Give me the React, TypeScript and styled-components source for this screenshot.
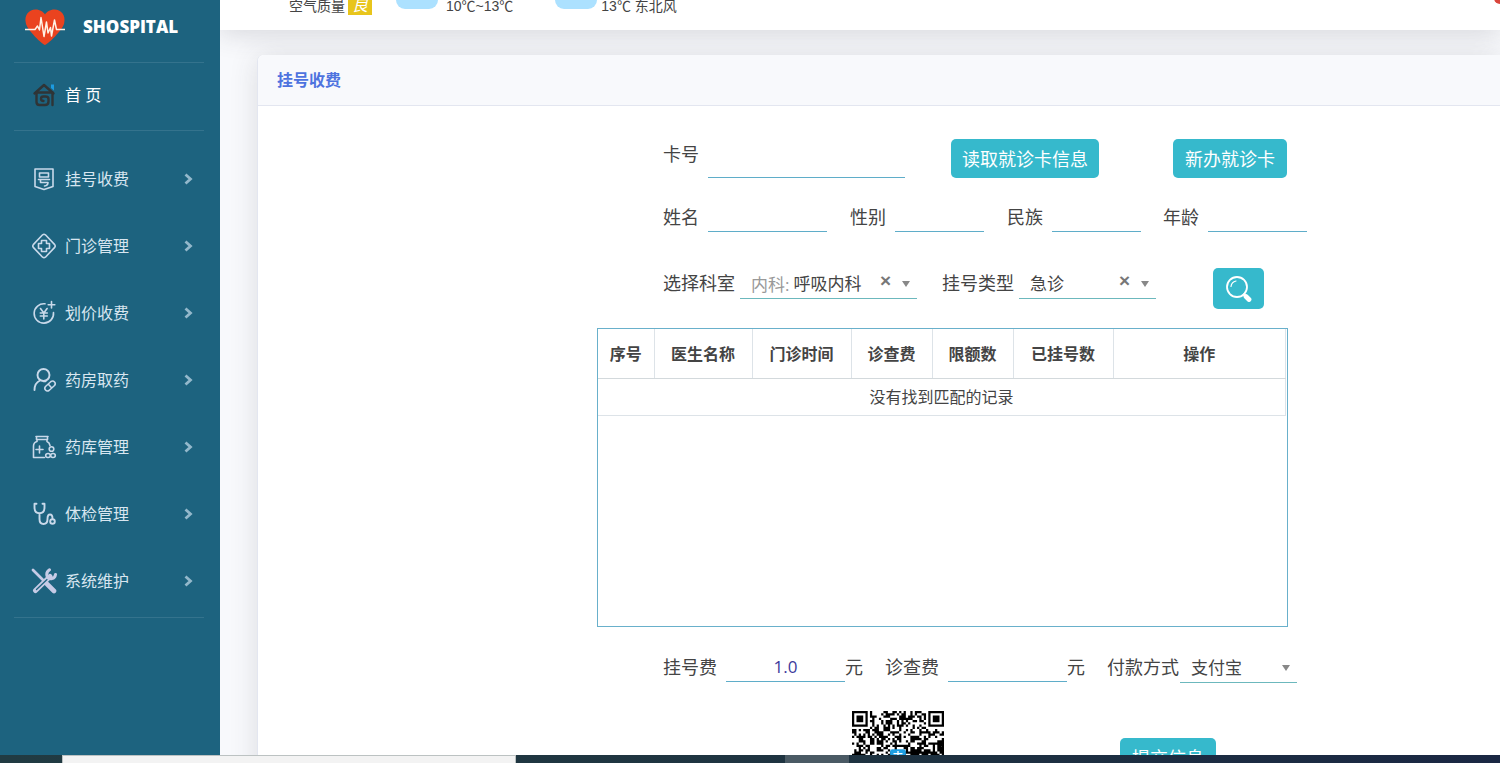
import React, { useState } from "react";
import styled, { createGlobalStyle } from "styled-components";

const GlobalStyle = createGlobalStyle`
  *, *::before, *::after { box-sizing: border-box; }
  body {
    margin: 0;
    background: #f8f9fc;
    color: #444;
    font-family: "Open Sans", "Noto Sans CJK SC", sans-serif;
    font-size: 16px;
  }
  button, input, select { font-family: inherit; margin: 0; }
`;

const Screen = styled.div`
  display: flex;
  flex-direction: column;
  height: 100vh;
  overflow: hidden;
`;

const Workspace = styled.div`
  display: flex;
  flex: 1;
  min-height: 0;
  overflow: hidden;
`;

/* ---------- sidebar ---------- */

const Sidebar = styled.nav`
  flex: none;
  width: 220px;
  padding: 0 16px 0 14px;
  background: #1d637f;
`;

const Brand = styled.a`
  display: flex;
  align-items: center;
  gap: 17px;
  height: 62px;
  padding: 0 0 9px 10px;
  color: #fff;
  font-size: 17px;
  font-weight: 800;
  text-decoration: none;
`;

const Divider = styled.hr`
  margin: 0;
  border: 0;
  border-top: 1px solid #34738d;
`;

const NavGroup = styled.div<{ $spaced?: boolean }>`
  padding: ${(p) => (p.$spaced ? "16px 0 1px" : "0")};
`;

const NavLink = styled.a`
  display: flex;
  align-items: center;
  gap: 8px;
  height: 67px;
  padding: 0 11px 4px 17px;
  color: #d8e6f0;
  font-size: 16px;
  text-decoration: none;
`;

const NavText = styled.span<{ $bright?: boolean }>`
  flex: 1;
  padding-bottom: 2px;
  color: ${(p) => (p.$bright ? "#fff" : "inherit")};
`;

/* ---------- content frame ---------- */

const Content = styled.div`
  display: flex;
  flex: 1;
  flex-direction: column;
  min-width: 0;
  overflow: hidden;
`;

const TopBar = styled.header`
  display: flex;
  flex: none;
  align-items: flex-end;
  height: 30px;
  padding: 0 0 15px 69px;
  background: #fff;
  box-shadow: 0 2px 28px rgba(58, 59, 69, 0.2);
  color: #444;
  font-family: "Liberation Sans", "Noto Sans CJK SC", sans-serif;
  font-size: 14px;
  line-height: 18px;
`;

const AirBadge = styled.em`
  width: 24px;
  margin-left: 3px;
  background: #e8c51c;
  color: #fff;
  font-size: 16px;
  text-align: center;
`;

const Weather = styled.span`
  display: flex;
  align-items: flex-end;
  gap: 8px;
  margin-left: 24px;
  & + & { gap: 4px; margin-left: 42px; }
`;

const Cloud = styled.span`
  width: 42px;
  height: 22px;
  margin-bottom: 6px;
  border-radius: 9px;
  background: #ace1ff;
`;

const Alert = styled.span`
  width: 16px;
  height: 16px;
  margin: 0 -10px 11px auto;
  border-radius: 6px;
  background: #d9453c;
`;

const Card = styled.section`
  flex: 1;
  margin: 25px 0 0 37px;
  border-left: 1px solid #e3e6f0;
  border-radius: 6px 0 0 0;
  background: #fff;
  box-shadow: 0 2px 28px rgba(58, 59, 69, 0.15);
`;

const CardTitle = styled.h1`
  margin: 0;
  padding: 0 19px;
  border-bottom: 1px solid #e3e6f0;
  border-radius: 6px 0 0 0;
  background: #f8f9fc;
  color: #4e73df;
  font-size: 16px;
  font-weight: 700;
  line-height: 50px;
`;

const CardBody = styled.div`
  display: grid;
  grid-template-columns: minmax(0, 339fr) 691px minmax(0, 212fr);
  padding-top: 33px;
`;

const Form = styled.form`
  grid-column: 2;
  color: #444;
  font-size: 18px;
`;

/* ---------- form rows ---------- */

const Row = styled.div<{ $top?: number }>`
  display: flex;
  align-items: flex-start;
  margin-top: ${(p) => p.$top ?? 0}px;
  padding-left: 66px;
  white-space: nowrap;
  & > * { flex: none; }
`;

const Label = styled.label<{ $gap?: number; $lead?: number }>`
  margin-left: ${(p) => p.$lead ?? 0}px;
  padding-right: ${(p) => p.$gap ?? 9}px;
  line-height: 30px;
`;

const Unit = styled.span`
  line-height: 30px;
`;

const LineInput = styled.input<{ $width: number; $height?: number }>`
  width: ${(p) => p.$width}px;
  height: ${(p) => p.$height ?? 30}px;
  padding: 0;
  border: 0;
  border-bottom: 1px solid #5fadc9;
  outline: 0;
  background: transparent;
  color: #3c3a9c;
  font-size: 17px;
  text-align: center;
`;

const Action = styled.button<{ $width: number; $lead: number; $height?: number }>`
  display: flex;
  align-items: center;
  justify-content: center;
  width: ${(p) => p.$width}px;
  height: ${(p) => p.$height ?? 39}px;
  margin-left: ${(p) => p.$lead}px;
  padding: 0 0 1px;
  border: 0;
  border-radius: 5px;
  background: #36b9cc;
  color: #fff;
  font-size: 18px;
`;

const Combo = styled.span<{ $width: number }>`
  display: flex;
  align-items: center;
  width: ${(p) => p.$width}px;
  height: 31px;
  padding: 0 7px 0 11px;
  border-bottom: 1px solid #6cb8bd;
  font-size: 17px;
`;

const Prefix = styled.span`
  margin-right: 4px;
  color: #999;
`;

const Select = styled.select`
  flex: 1;
  min-width: 0;
  padding: 0;
  border: 0;
  outline: 0;
  appearance: none;
  background: transparent;
  color: #444;
  font-size: 17px;
`;

const Clear = styled.button`
  padding: 0 0 4px;
  border: 0;
  background: none;
  color: #777;
  font-family: "Liberation Sans", sans-serif;
  font-size: 19px;
  font-weight: 700;
  line-height: 20px;
`;

const Caret = styled.span`
  width: 8px;
  height: 6px;
  margin: 2px 0 0 11px;
  background: #888;
  clip-path: polygon(0 0, 100% 0, 50% 100%);
`;

/* ---------- doctor table ---------- */

const TableBox = styled.div`
  height: 299px;
  margin-top: 19px;
  padding-right: 1px;
  border: 1px solid #69b0cb;
`;

const Table = styled.table`
  width: 100%;
  border-collapse: collapse;
  table-layout: fixed;
  color: #444;
  font-size: 16px;
`;

const Th = styled.th<{ $width?: number }>`
  width: ${(p) => (p.$width ? `${p.$width}px` : "auto")};
  height: 49px;
  padding: 0;
  border-right: 1px solid #dde3e8;
  border-bottom: 1px solid #d3d9dc;
  font-weight: 700;
`;

const Td = styled.td`
  height: 37px;
  padding: 0 0 2px;
  border-right: 1px solid #dde3e8;
  border-bottom: 1px solid #dde3e8;
  text-align: center;
`;

const PayRow = styled.div`
  display: flex;
  align-items: center;
  margin-top: 28px;
  padding-left: 255px;
`;

/* ---------- desktop task bar ---------- */

const TaskBar = styled.footer`
  display: flex;
  flex: none;
  height: 8px;
  padding-left: 62px;
  background: linear-gradient(90deg, #213b42, #1e3340 55%, #1a2743);
`;

const TaskSearch = styled.div`
  width: 454px;
  border: 1px solid #bcc2c2;
  border-width: 1px 1px 0;
  background: #f3f3f3;
`;

const TaskActive = styled.div`
  width: 64px;
  margin-left: 269px;
  background: #4a5a64;
`;

/* ---------- drawings ---------- */

const Glyph = ({ children }: { children: React.ReactNode }) => (
  <svg width="26" height="26" viewBox="0 0 26 26" fill="none" stroke="#c9d9ea" strokeWidth="1.6" strokeLinecap="round" strokeLinejoin="round" aria-hidden="true">
    {children}
  </svg>
);

const HeartLogo = () => (
  <svg width="42" height="38" viewBox="0 0 42 38" fill="none" aria-hidden="true">
    <path d="M21 37C19 37 3 22 1.800 15C0 7 5 1.500 11.500 1.500C16 1.500 19.500 4 21 6.500C22.500 4 26 1.500 30.500 1.500C37 1.500 42 7 40.200 15C39 22 23 37 21 37Z" fill="#ea431f" />
    <path d="M1 21.500H11L13.500 18L15.500 22L17 9.500L20 28.500L22.500 14L24 25L26.500 19.500L27.500 28L30.500 12L32.500 21.500H41" stroke="#fff3e6" strokeWidth="1.500" strokeLinejoin="round" />
  </svg>
);

const HomeIcon = () => (
  <Glyph>
    <path d="M20 2.500h3v6l-3-2.500z" fill="#1c9be0" stroke="none" />
    <g stroke="#2f3436" strokeWidth="2.400">
      <path d="M3.500 11.500L13 3l9.500 8.500" />
      <path d="M6.500 10.500h15V23M5.500 11v9q0 3 3 3h5.500q3.500 0 3.500-3.500v-2.500q0-2.500-3-2.500h-2q-2.500 0-2.500 2.200t2.500 2.300" />
    </g>
  </Glyph>
);

const RegisterIcon = () => (
  <Glyph>
    <path d="M4 3h18v17.500L13 23.500L4 20.500z" />
    <path d="M8.500 7h9v4h-9zM7.500 13.500h11M9.500 13.500v3h7.500q0 3-3.500 3.500" />
  </Glyph>
);

const ClinicIcon = () => (
  <Glyph>
    <path d="M11.600 1.800q1.400-1 2.800 0l9.300 9.800q1 1.400 0 2.800l-9.300 9.800q-1.400 1-2.800 0l-9.300-9.800q-1-1.400 0-2.800z" />
    <path d="M10.500 7.500h5v3h3v5h-3v3h-5v-3h-3v-5h3z" />
  </Glyph>
);

const PriceIcon = () => (
  <Glyph>
    <path d="M14 3.800A9.700 9.700 0 1 0 22.500 12.500M20.500 1.500v6.500M17.200 4.700h6.600" />
    <path d="M9.500 8.500l3.300 4.500l3.300-4.500M12.800 13v6M9.300 13h7M9.300 16h7" />
  </Glyph>
);

const PharmacyIcon = () => (
  <Glyph>
    <circle cx="12.500" cy="8" r="6" strokeWidth="1.900" />
    <path d="M3.500 23q0-7 5.500-9.500M12.500 14.300h2" strokeWidth="1.900" />
    <path d="M14.500 19.500l5.500-5q2-1.200 3.500.5t0 3.500l-5.500 5q-2 1.200-3.500-.5t0-3.500zM17.200 17l3.500 4" />
  </Glyph>
);

const StoreIcon = () => (
  <Glyph>
    <path d="M5 2.500h12M5.500 2.500v3h11v-3M6 5.500v2q-3.500 1-3.500 4.500v11.500h11M16 5.500v2q2.500 1 3 4M5 15.500h7M8.500 12v7" />
    <circle cx="20.500" cy="15" r="2.300" />
    <ellipse cx="17" cy="21.500" rx="2.300" ry="2" />
    <ellipse cx="22" cy="21.500" rx="2.300" ry="2" />
  </Glyph>
);

const ExamIcon = () => (
  <Glyph>
    <g strokeWidth="1.900">
      <path d="M5.500 2.800H3.500v3.500q0 6 5 6t5-6v-3.500H11.500M8.500 12.500v5.500q0 5 4 5t4-5q0-4.500 2.500-4.500q2.500 0 2.500 4" />
      <circle cx="21.500" cy="20.500" r="2.300" />
    </g>
  </Glyph>
);

const ToolsIcon = () => (
  <Glyph>
    <g stroke="#c6cbe6">
      <path d="M2 2l10 10" strokeWidth="2.800" />
      <path d="M16 16l7 7" strokeWidth="4.600" />
      <path d="M4.500 22.500L19 8.500" strokeWidth="5" />
      <path d="M5.500 21.500L16 11.500" stroke="#1d637f" strokeWidth="1.300" />
      <path d="M18.500 1.800Q15 4 16 8q2 3.500 5 2.500q3-.5 3.500-4" strokeWidth="3" />
    </g>
  </Glyph>
);

const Chevron = () => (
  <svg width="9" height="12" viewBox="0 0 9 12" fill="none" stroke="#93b8cb" strokeWidth="2.800" aria-hidden="true">
    <path d="M1.500 1.500L6.500 6L1.500 10.500" />
  </svg>
);

const SearchIcon = () => (
  <svg width="28" height="28" viewBox="0 0 28 28" fill="none" stroke="#fff" strokeLinecap="round" aria-hidden="true">
    <circle cx="12" cy="13" r="10" strokeWidth="1.800" />
    <path d="M6 12.500q.5-4.500 5-5.500" strokeWidth="1.200" />
    <path d="M19 20.500l1.500 1.500" strokeWidth="2.500" />
    <path d="M21 22.500l3 3" strokeWidth="4.800" />
  </svg>
);

const QR_SIZE = 41;

const isFinder = (x: number, y: number) =>
  (x < 8 && y < 8) || (x > QR_SIZE - 9 && y < 8) || (x < 8 && y > QR_SIZE - 9);

const qrPath = (() => {
  let seed = 20211;
  let d = "";
  for (let y = 0; y < QR_SIZE; y++) {
    for (let x = 0; x < QR_SIZE; x++) {
      seed = (seed * 1103515245 + 12345) % 2147483648;
      if (!isFinder(x, y) && seed / 2147483648 > 0.48) d += `M${x} ${y}h1v1h-1z`;
    }
  }
  return d;
})();

const QrCode = () => (
  <svg width="92" height="92" viewBox="0 0 41 41" role="img" aria-label="支付宝">
    <path d={qrPath} fill="#000" />
    {[[0, 0], [34, 0], [0, 34]].map(([x, y]) => (
      <g key={`${x}-${y}`}>
        <path d={`M${x + 0.5} ${y + 0.5}h6v6h-6z`} fill="#fff" stroke="#000" />
        <path d={`M${x + 2} ${y + 2}h3v3h-3z`} fill="#000" />
      </g>
    ))}
    <rect x="17" y="17" width="7" height="7" rx="1" fill="#1e9fe3" />
    <path d="M18.500 19h4M20.500 17.800v2.500M18.800 20.500h3.500q-1 2-3.500 2.500" stroke="#fff" strokeWidth="0.600" fill="none" />
  </svg>
);

/* ---------- page ---------- */

const menu = [
  { text: "挂号收费", Icon: RegisterIcon },
  { text: "门诊管理", Icon: ClinicIcon },
  { text: "划价收费", Icon: PriceIcon },
  { text: "药房取药", Icon: PharmacyIcon },
  { text: "药库管理", Icon: StoreIcon },
  { text: "体检管理", Icon: ExamIcon },
  { text: "系统维护", Icon: ToolsIcon },
];

const columns: { text: string; width?: number }[] = [
  { text: "序号", width: 56 },
  { text: "医生名称", width: 98 },
  { text: "门诊时间", width: 99 },
  { text: "诊查费", width: 81 },
  { text: "限额数", width: 81 },
  { text: "已挂号数", width: 100 },
  { text: "操作" },
];

export default function App() {
  const [fee, setFee] = useState("1.0");
  return (
    <Screen>
      <GlobalStyle />
      <Workspace>
        <Sidebar>
          <Brand href="#">
            <HeartLogo />
            SHOSPITAL
          </Brand>
          <Divider />
          <NavGroup>
            <NavLink href="#">
              <HomeIcon />
              <NavText $bright>首 页</NavText>
            </NavLink>
          </NavGroup>
          <Divider />
          <NavGroup $spaced>
            {menu.map(({ text, Icon }) => (
              <NavLink href="#" key={text}>
                <Icon />
                <NavText>{text}</NavText>
                <Chevron />
              </NavLink>
            ))}
          </NavGroup>
          <Divider />
        </Sidebar>

        <Content>
          <TopBar>
            <span>空气质量</span>
            <AirBadge>良</AirBadge>
            <Weather>
              <Cloud />
              10℃~13℃
            </Weather>
            <Weather>
              <Cloud />
              13℃ 东北风
            </Weather>
            <Alert />
          </TopBar>

          <Card>
            <CardTitle>挂号收费</CardTitle>
            <CardBody>
              <Form onSubmit={(e) => e.preventDefault()}>
                <Row>
                  <Label htmlFor="card">卡号</Label>
                  <LineInput id="card" $width={197} $height={39} />
                  <Action type="button" $width={148} $lead={46}>读取就诊卡信息</Action>
                  <Action type="button" $width={114} $lead={74}>新办就诊卡</Action>
                </Row>

                <Row $top={24}>
                  <Label htmlFor="name">姓名</Label>
                  <LineInput id="name" $width={119} />
                  <Label htmlFor="sex" $lead={23}>性别</Label>
                  <LineInput id="sex" $width={89} />
                  <Label htmlFor="nation" $lead={23}>民族</Label>
                  <LineInput id="nation" $width={89} />
                  <Label htmlFor="age" $lead={22}>年龄</Label>
                  <LineInput id="age" $width={99} />
                </Row>

                <Row $top={36}>
                  <Label htmlFor="dept" $gap={5}>选择科室</Label>
                  <Combo $width={177}>
                    <Prefix>内科:</Prefix>
                    <Select id="dept"><option>呼吸内科</option></Select>
                    <Clear type="button" aria-label="清除科室">×</Clear>
                    <Caret />
                  </Combo>
                  <Label htmlFor="kind" $gap={5} $lead={25}>挂号类型</Label>
                  <Combo $width={137}>
                    <Select id="kind"><option>急诊</option></Select>
                    <Clear type="button" aria-label="清除类型">×</Clear>
                    <Caret />
                  </Combo>
                  <Action type="button" aria-label="查询" $width={51} $height={41} $lead={57}>
                    <SearchIcon />
                  </Action>
                </Row>

                <TableBox>
                  <Table>
                    <thead>
                      <tr>
                        {columns.map((c) => (
                          <Th key={c.text} $width={c.width}>{c.text}</Th>
                        ))}
                      </tr>
                    </thead>
                    <tbody>
                      <tr>
                        <Td colSpan={columns.length}>没有找到匹配的记录</Td>
                      </tr>
                    </tbody>
                  </Table>
                </TableBox>

                <Row $top={25}>
                  <Label htmlFor="fee">挂号费</Label>
                  <LineInput id="fee" $width={119} value={fee} onChange={(e) => setFee(e.target.value)} />
                  <Unit>元</Unit>
                  <Label htmlFor="exam" $lead={22}>诊查费</Label>
                  <LineInput id="exam" $width={119} />
                  <Unit>元</Unit>
                  <Label htmlFor="pay" $lead={22} $gap={1}>付款方式</Label>
                  <Combo $width={117}>
                    <Select id="pay"><option>支付宝</option></Select>
                    <Caret />
                  </Combo>
                </Row>

                <PayRow>
                  <QrCode />
                  <Action type="submit" $width={96} $lead={176}>提交信息</Action>
                </PayRow>
              </Form>
            </CardBody>
          </Card>
        </Content>
      </Workspace>

      <TaskBar>
        <TaskSearch />
        <TaskActive />
      </TaskBar>
    </Screen>
  );
}
